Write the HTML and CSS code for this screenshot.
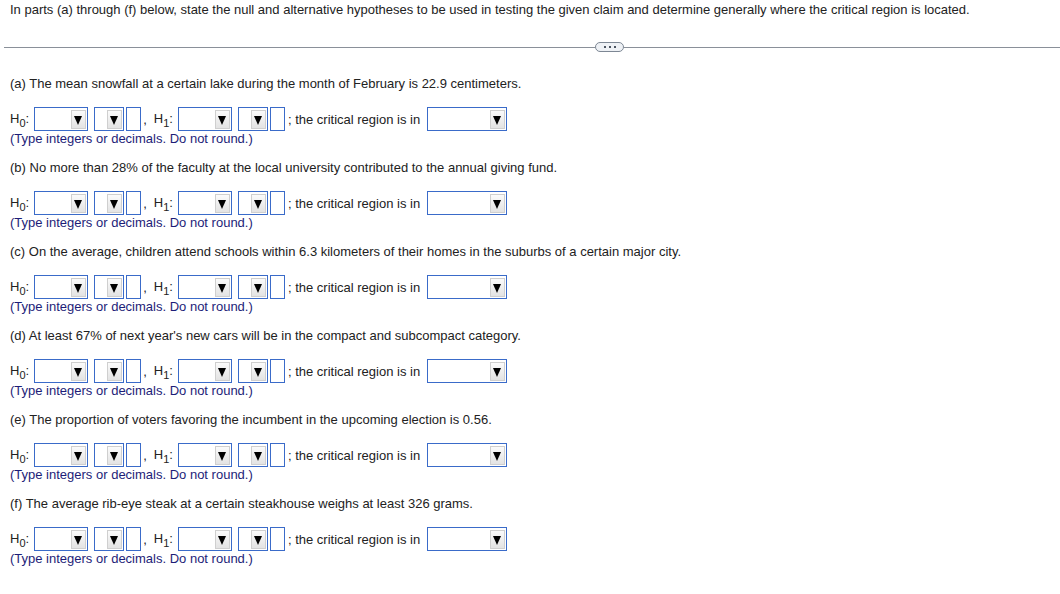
FILE: index.html
```html
<!DOCTYPE html>
<html>
<head>
<meta charset="utf-8">
<link rel="stylesheet" href="styles.css">
</head>
<body>
<div class="intro">In parts (a) through (f) below, state the null and alternative hypotheses to be used in testing the given claim and determine generally where the critical region is located.</div>
<div class="divider"><span class="line"></span><span class="pill"><i></i><i></i><i></i></span><span class="line"></span></div>
<div class="parts">
  <div class="part">
    <div class="q">(a) The mean snowfall at a certain lake during the month of February is 22.9 centimeters.</div>
    <div class="row">
      <span class="hl">H<sub>0</sub>:</span>
      <span class="sel w1"><span class="btn"></span></span><span class="sel w2"><span class="btn"></span></span><span class="inp"></span>
      <span class="comma">,</span><span class="hl h1">H<sub>1</sub>:</span>
      <span class="sel w1"><span class="btn"></span></span><span class="sel w2"><span class="btn"></span></span><span class="inp"></span>
      <span class="crit">; the critical region is in</span>
      <span class="sel w3"><span class="btn"></span></span>
    </div>
    <div class="hint">(Type integers or decimals. Do not round.)</div>
  </div>
  <div class="part">
    <div class="q">(b) No more than 28% of the faculty at the local university contributed to the annual giving fund.</div>
    <div class="row">
      <span class="hl">H<sub>0</sub>:</span>
      <span class="sel w1"><span class="btn"></span></span><span class="sel w2"><span class="btn"></span></span><span class="inp"></span>
      <span class="comma">,</span><span class="hl h1">H<sub>1</sub>:</span>
      <span class="sel w1"><span class="btn"></span></span><span class="sel w2"><span class="btn"></span></span><span class="inp"></span>
      <span class="crit">; the critical region is in</span>
      <span class="sel w3"><span class="btn"></span></span>
    </div>
    <div class="hint">(Type integers or decimals. Do not round.)</div>
  </div>
  <div class="part">
    <div class="q">(c) On the average, children attend schools within 6.3 kilometers of their homes in the suburbs of a certain major city.</div>
    <div class="row">
      <span class="hl">H<sub>0</sub>:</span>
      <span class="sel w1"><span class="btn"></span></span><span class="sel w2"><span class="btn"></span></span><span class="inp"></span>
      <span class="comma">,</span><span class="hl h1">H<sub>1</sub>:</span>
      <span class="sel w1"><span class="btn"></span></span><span class="sel w2"><span class="btn"></span></span><span class="inp"></span>
      <span class="crit">; the critical region is in</span>
      <span class="sel w3"><span class="btn"></span></span>
    </div>
    <div class="hint">(Type integers or decimals. Do not round.)</div>
  </div>
  <div class="part">
    <div class="q">(d) At least 67% of next year's new cars will be in the compact and subcompact category.</div>
    <div class="row">
      <span class="hl">H<sub>0</sub>:</span>
      <span class="sel w1"><span class="btn"></span></span><span class="sel w2"><span class="btn"></span></span><span class="inp"></span>
      <span class="comma">,</span><span class="hl h1">H<sub>1</sub>:</span>
      <span class="sel w1"><span class="btn"></span></span><span class="sel w2"><span class="btn"></span></span><span class="inp"></span>
      <span class="crit">; the critical region is in</span>
      <span class="sel w3"><span class="btn"></span></span>
    </div>
    <div class="hint">(Type integers or decimals. Do not round.)</div>
  </div>
  <div class="part">
    <div class="q">(e) The proportion of voters favoring the incumbent in the upcoming election is 0.56.</div>
    <div class="row">
      <span class="hl">H<sub>0</sub>:</span>
      <span class="sel w1"><span class="btn"></span></span><span class="sel w2"><span class="btn"></span></span><span class="inp"></span>
      <span class="comma">,</span><span class="hl h1">H<sub>1</sub>:</span>
      <span class="sel w1"><span class="btn"></span></span><span class="sel w2"><span class="btn"></span></span><span class="inp"></span>
      <span class="crit">; the critical region is in</span>
      <span class="sel w3"><span class="btn"></span></span>
    </div>
    <div class="hint">(Type integers or decimals. Do not round.)</div>
  </div>
  <div class="part">
    <div class="q">(f) The average rib-eye steak at a certain steakhouse weighs at least 326 grams.</div>
    <div class="row">
      <span class="hl">H<sub>0</sub>:</span>
      <span class="sel w1"><span class="btn"></span></span><span class="sel w2"><span class="btn"></span></span><span class="inp"></span>
      <span class="comma">,</span><span class="hl h1">H<sub>1</sub>:</span>
      <span class="sel w1"><span class="btn"></span></span><span class="sel w2"><span class="btn"></span></span><span class="inp"></span>
      <span class="crit">; the critical region is in</span>
      <span class="sel w3"><span class="btn"></span></span>
    </div>
    <div class="hint">(Type integers or decimals. Do not round.)</div>
  </div>
</div>
</body>
</html>
```
FILE: styles.css
```css
html, body {
  margin: 0;
  padding: 0;
  background: #fff;
}
body {
  font-family: "Liberation Sans", Arial, sans-serif;
  font-size: 13px;
  color: #222;
  width: 1060px;
}
.intro {
  padding: 2px 10px 0;
  line-height: 16px;
}
.divider {
  display: flex;
  align-items: center;
  margin: 24px 0 0 4px;
  height: 10px;
}
.divider .line {
  flex: 1;
  height: 1px;
  background: #8a9099;
}
.divider .line:first-child {
  flex: 0 0 591px;
}
.pill {
  width: 27px;
  height: 8px;
  border: 1px solid #7d8794;
  border-radius: 5px;
  background: #eef1f5;
  display: flex;
  align-items: center;
  justify-content: center;
  gap: 3px;
}
.pill i {
  width: 2px;
  height: 2px;
  background: #4a5360;
}
.parts {
  padding: 24px 0 0 10px;
}
.part {
  height: 84px;
}
.q {
  line-height: 16px;
  color: #222;
}
.row {
  display: flex;
  align-items: center;
  height: 24px;
  margin-top: 15px;
}
.hl {
  line-height: 16px;
  margin-right: 5px;
}
.hl sub {
  font-size: 11px;
  vertical-align: -4px;
  line-height: 0;
}
.h1 {
  margin-left: 7px;
}
.sel {
  box-sizing: border-box;
  height: 24px;
  border: 1px solid #3a6bc9;
  display: flex;
  justify-content: flex-end;
  align-items: center;
  padding-right: 1px;
  margin-right: 6px;
}
.w1 { width: 54px; }
.w2 { width: 30px; margin-right: 2px; }
.w3 { width: 80px; margin-left: 7px; }
.btn {
  box-sizing: border-box;
  width: 15px;
  height: 19px;
  background: linear-gradient(#fbfbfb, #e3e3e3);
  border: 1px solid #cfcfcf;
  position: relative;
}
.btn::after {
  content: "";
  position: absolute;
  left: 2px;
  top: 5px;
  border-left: 4.5px solid transparent;
  border-right: 4.5px solid transparent;
  border-top: 9px solid #000;
}
.inp {
  box-sizing: border-box;
  width: 15px;
  height: 24px;
  border: 1px solid #3a6bc9;
}
.comma {
  margin-left: 2px;
}
.crit {
  margin-left: 3px;
}
.hint {
  line-height: 16px;
  color: #1d1d78;
}
```
